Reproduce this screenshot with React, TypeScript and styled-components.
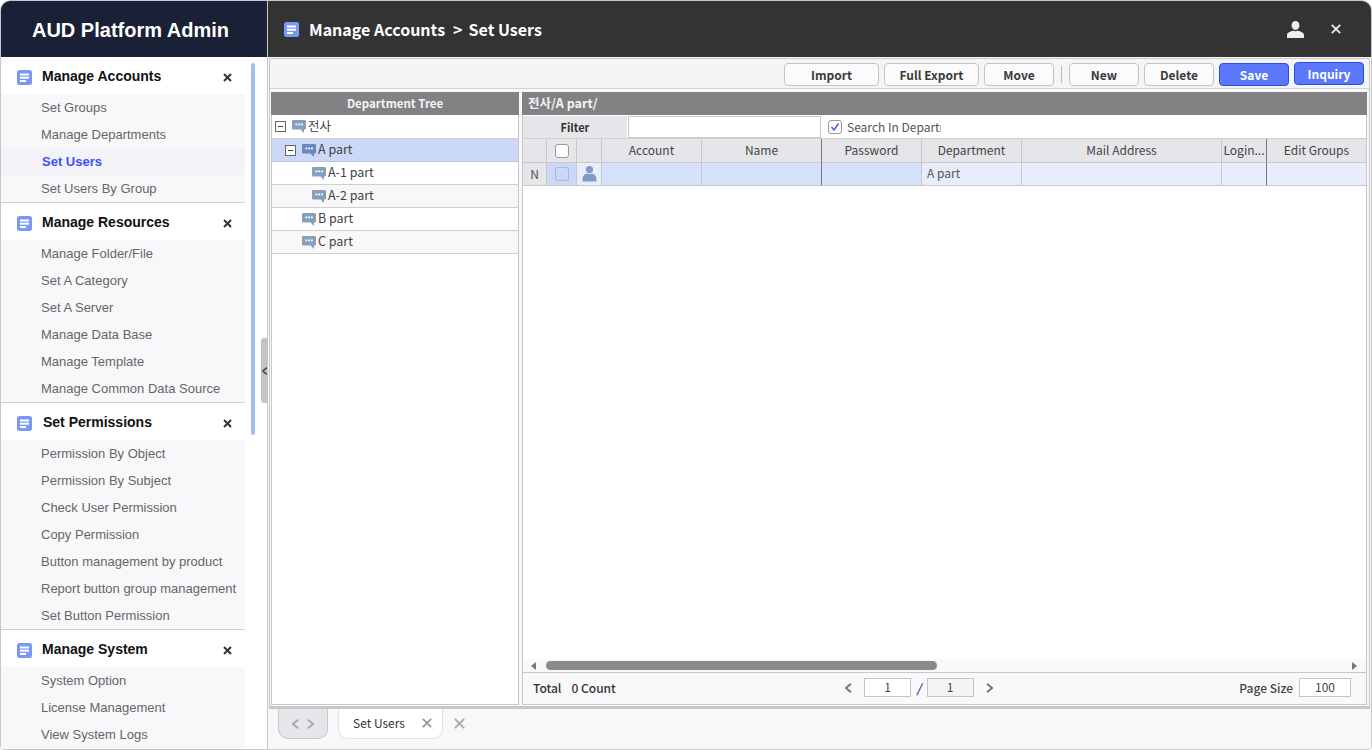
import React from "react";
import styled, { createGlobalStyle } from "styled-components";

const Global = createGlobalStyle`
  html, body { margin: 0; padding: 0; height: 100%; background: #fff; overflow: hidden; }
  #root { height: 100vh; }
  * { box-sizing: border-box; }
`;
const UI = `"Noto Sans CJK KR", "Noto Sans", sans-serif`;
const AR = `"Liberation Sans", Arial, sans-serif`;

const Frame = styled.div`
  width: 1372px; height: 750px; display: flex; overflow: hidden;
  border: 1px solid #c8c8c8; border-radius: 10px 10px 4px 4px; background: #f8f8fa; position: relative;
`;
const Side = styled.aside`
  width: 267px; flex: none; display: flex; flex-direction: column; border-right: 1px solid #c8c8c8; background: #fff; position: relative;
`;
const Brand = styled.div`
  height: 56px; flex: none; background: #1a2035; color: #fff; font: 700 20px ${AR};
  display: flex; align-items: center; justify-content: center; padding: 2px 7px 0 0;
`;
const Menu = styled.div`
  width: 244px; flex: 1; overflow: hidden; display: flex; flex-direction: column;
`;
const Section = styled.section`
  flex: none; border-bottom: 1px solid #cfcfcf;
  &:last-child { border-bottom: 0; }
`;
const SecTitle = styled.div`
  height: 37px; display: flex; align-items: center; padding: 0 13px 0 16px; background: #fff;
`;
const SecIcon = styled.span`
  display: flex; margin-top: 3px;
`;
const SecName = styled.span<{ $nudge?: number }>`
  font: 700 14px ${AR}; color: #111; margin-left: ${p => 10 + (p.$nudge || 0)}px; flex: 1;
`;
const Item = styled.div<{ $active?: boolean }>`
  height: 27px; padding-left: ${p => (p.$active ? 41 : 40)}px; font: ${p => (p.$active ? 700 : 400)} 13px/27px ${AR};
  background: ${p => (p.$active ? "#f3f3f7" : "#f8f8fa")}; color: ${p => (p.$active ? "#3e50f7" : "#666")};
  white-space: nowrap;
`;
const Thumb = styled.div`
  position: absolute; left: 250px; top: 62px; width: 4px; height: 372px; background: #a5bcf5; border-radius: 2px;
`;
const Handle = styled.div`
  position: absolute; left: 260px; top: 337px; width: 7px; height: 65px; background: #c4c4c4; border-radius: 3px 0 0 3px;
  display: flex; align-items: center; justify-content: center;
`;
const Main = styled.main`
  flex: 1; min-width: 0; display: flex; flex-direction: column;
`;
const Top = styled.header`
  height: 56px; flex: none; background: #333; color: #fff; display: flex; align-items: center; padding: 0 30px 0 16px;
`;
const Crumb = styled.div`
  font: 700 16px ${UI}; margin-left: 10px; flex: 1; display: flex; gap: 7px; color: #fff;
`;
const CrumbSep = styled.span`
  margin: 0 -1px 0 1px;
`;
const TopIcons = styled.div`
  display: flex; align-items: center; gap: 27px; margin-left: -1px;
`;
const Work = styled.div`
  height: 651px; flex: none; margin: 1px 1px 0 1px; border: 1px solid #c8c8c8; border-bottom-width: 3px;
  display: flex; flex-direction: column; background: #f8f8fa;
`;
const Toolbar = styled.div`
  height: 30px; flex: none; display: flex; align-items: center; justify-content: flex-end; gap: 5px; padding: 4px 5px 2px 0; background: #f5f5f8; border-bottom: 1px solid #cfcfcf;
`;
const Btn = styled.button<{ $w: number; $primary?: boolean; $up?: boolean }>`
  width: ${p => p.$w}px; height: 23px; padding: 0; border-radius: 4px; font: 700 12px ${UI};
  border: 1px solid ${p => (p.$primary ? "#2a50d8" : "#c4c4c4")};
  background: ${p => (p.$primary ? "#5b78fb" : "#fbfbfd")}; color: ${p => (p.$primary ? "#fff" : "#3a3a3a")};
  position: relative; top: ${p => (p.$up ? -1 : 0)}px;
  display: flex; align-items: center; justify-content: center;
`;
const Sep = styled.i`
  width: 1px; height: 17px; background: #bbb; margin: 0 2px;
`;
const Panels = styled.div`
  flex: 1; min-height: 0; display: flex; gap: 3px; padding: 3px 2px 1px 1px;
`;
const TreePanel = styled.div`
  width: 248px; flex: none; border: 1px solid #c8c8c8; border-top: 0; background: #fff; display: flex; flex-direction: column;
`;
const GridPanel = styled.div`
  flex: 1; min-width: 0; border: 1px solid #c8c8c8; border-top: 0; background: #fff; display: flex; flex-direction: column;
`;
const PanelHead = styled.div<{ $center?: boolean }>`
  height: 23px; flex: none; background: #828284; color: #f4f4f4; margin: 0 -1px;
  font: 700 ${p => (p.$center ? "11.5px" : "12.5px")}/22px ${UI};
  text-align: ${p => (p.$center ? "center" : "left")}; padding-left: ${p => (p.$center ? 0 : 6)}px;
`;
const TreeRow = styled.div<{ $indent: number; $sel?: boolean; $alt?: boolean; $first?: boolean }>`
  height: ${p => (p.$first ? 24 : 23)}px; flex: none; display: flex; align-items: center; padding-left: ${p => p.$indent}px; font: 400 12.5px ${UI}; color: #444;
  background: ${p => (p.$sel ? "#ccd8f8" : p.$alt ? "#f8f8f8" : "#fff")};
  border-bottom: 1px solid ${p => (p.$sel ? "#b9c6e8" : "#cfcfcf")};
`;
const TreeLabel = styled.span`
  margin: 0 0 3px 2px;
`;
const Toggle = styled.span`
  width: 11px; height: 11px; border: 1px solid #666; background: #fff; margin-right: 6px; position: relative; flex: none;
  &::after { content: ""; position: absolute; left: 2px; right: 2px; top: 4px; height: 1px; background: #444; }
`;
const FilterBar = styled.div`
  height: 24px; flex: none; display: flex; align-items: center; background: #fff; border-bottom: 1px solid #cfcfcf;
`;
const FilterLabel = styled.div`
  width: 104px; height: 22px; flex: none; background: #e6e6ea; font: 700 11px/22px ${UI}; color: #333; text-align: center;
`;
const FilterInput = styled.div`
  width: 193px; height: 22px; margin-left: 1px; flex: none; border: 1px solid #c8c8c8; background: #fff;
`;
const CheckBox = styled.span<{ $dim?: boolean }>`
  width: 14px; height: 14px; border: 1px solid ${p => (p.$dim ? "#a9b6d6" : "#999")}; border-radius: 3px; background: ${p => (p.$dim ? "#ccd8f8" : "#fff")};
  display: inline-flex; align-items: center; justify-content: center; flex: none;
`;
const FilterCheck = styled.div`
  display: flex; align-items: center; margin-left: 7px; width: 113px; overflow: hidden; gap: 5px; white-space: nowrap;
  font: 400 12px ${UI}; color: #555;
`;
const Table = styled.div`
  display: grid; grid-template-columns: 24px 30px 25px 100px 120px 100px 100px 200px 45px 100px; flex: none;
`;
const Th = styled.div<{ $dark?: boolean }>`
  height: 24px; background: #e6e6ea; border-right: 1px solid ${p => (p.$dark ? "#777" : "#c8c8c8")}; border-bottom: 1px solid #c8c8c8;
  font: 400 12px/20px ${UI}; color: #444; text-align: center; display: flex; align-items: center; justify-content: center; white-space: nowrap; overflow: hidden;
  padding-bottom: 2px;
`;
const ThCheck = styled(Th)`
  padding-bottom: 0;
`;
const Td = styled.div<{ $bg: string; $dark?: boolean }>`
  height: 23px; background: ${p => p.$bg}; border-right: 1px solid ${p => (p.$dark ? "#777" : "#c8c8c8")}; border-bottom: 1px solid #c8c8c8;
  font: 400 12px/20px ${UI}; color: #555; padding: 0 0 2px 5px; display: flex; align-items: center;
`;
const TdCenter = styled(Td)`
  justify-content: center; padding: 0;
`;
const Spacer = styled.div`
  flex: 1;
`;
const HScroll = styled.div`
  height: 14px; flex: none; background: #f9f9fb; display: flex; align-items: center; padding: 0 8px; gap: 10px; border-bottom: 1px solid #c8c8c8;
`;
const HThumb = styled.div`
  width: 391px; flex: none; height: 9px; background: #8a8a8a; border-radius: 5px;
`;
const Arrow = styled.i<{ $right?: boolean }>`
  width: 0; height: 0; flex: none; border-top: 4px solid transparent; border-bottom: 4px solid transparent;
  ${p => (p.$right ? "border-left: 5px solid #777; margin-left: 405px;" : "border-right: 5px solid #777;")}
`;
const Footer = styled.div`
  height: 31px; flex: none; display: flex; align-items: center; background: #f9f9fb; font: 500 12px ${UI}; color: #333; padding: 0 15px 2px 10px;
`;
const Total = styled.div`
  display: flex; gap: 10px; width: 312px;
`;
const Pager = styled.div`
  display: flex; align-items: center; flex: 1;
`;
const PagerGap = styled.span`
  width: 12px;
`;
const PageBox = styled.div<{ $ro?: boolean; $w?: number }>`
  width: ${p => p.$w || 47}px; height: 19px; border: 1px solid #c4c4c4; background: ${p => (p.$ro ? "#f4f4f4" : "#fff")};
  font: 400 12px/16px ${UI}; color: #444; text-align: center;
`;
const Slash = styled.span`
  color: #2a4a9a; margin: 0 5.5px; font: 700 12px ${UI}; font-style: italic;
`;
const PageSize = styled.span`
  margin-right: 6px; color: #444;
`;
const TabBar = styled.div`
  flex: 1; display: flex; align-items: flex-start; padding-left: 10px; background: #f8f8fa;
`;
const NavTab = styled.div`
  width: 50px; height: 30px; background: #e6e6ea; border: 1px solid #c8c8c8; border-top: 0; border-radius: 0 0 10px 10px;
  display: flex; align-items: center; justify-content: center; gap: 8px;
`;
const Tab = styled.div`
  width: 105px; height: 30px; margin-left: 10px; background: #fff; border: 1px solid #e4e4ea; border-top: 0; border-radius: 0 0 10px 10px;
  display: flex; align-items: center; padding: 0 10px 2px 14px; font: 400 12px ${UI}; color: #333; justify-content: space-between;
`;
const TabClose = styled.span`
  margin: 9px 0 0 11px; display: flex;
`;

const Doc = () => (
  <svg width="15" height="15" viewBox="0 0 15 15" style={{ flex: "none" }}>
    <rect width="15" height="15" rx="2.5" fill="#7b98f5" />
    <rect x="3" y="3.5" width="9" height="2" fill="#fff" />
    <rect x="3" y="6.7" width="9" height="2" fill="#fff" />
    <rect x="3" y="10" width="6" height="2" fill="#fff" />
  </svg>
);
const XSmall = () => (
  <svg width="9" height="9" viewBox="0 0 9 9" style={{ flex: "none", marginTop: 3 }}>
    <path d="M1 1 L8 8 M8 1 L1 8" stroke="#333" strokeWidth="2" />
  </svg>
);
const Bubble = ({ dark }: { dark?: boolean }) => (
  <svg width="14" height="13" viewBox="0 0 14 13" style={{ flex: "none" }}>
    <path d="M1.2 0 H12.8 A1.2 1.2 0 0 1 14 1.2 V8.3 A1.2 1.2 0 0 1 12.8 9.5 H12 V13 L8.5 9.5 H1.2 A1.2 1.2 0 0 1 0 8.3 V1.2 A1.2 1.2 0 0 1 1.2 0 Z" fill={dark ? "#6d86bb" : "#86a0bc"} />
    <rect x="3.4" y="3.5" width="1.8" height="1.8" fill="#fff" />
    <rect x="6.2" y="3.5" width="1.8" height="1.8" fill="#fff" />
    <rect x="9" y="3.5" width="1.8" height="1.8" fill="#fff" />
  </svg>
);
const Person = ({ size, color }: { size: number; color: string }) => (
  <svg width={size} height={size} viewBox="0 0 16 16">
    <ellipse cx="8" cy="4.2" rx="3.7" ry="4.2" fill={color} />
    <path d="M0 16 V13 C0 10.8 3.6 10 5.6 9 C7 9.8 9 9.8 10.4 9 C12.4 10 16 10.8 16 13 V16 Z" fill={color} />
  </svg>
);
const RowPerson = () => (
  <svg width="15" height="16" viewBox="0 0 15 16">
    <circle cx="7.5" cy="3.6" r="3.6" fill="#7f9bc4" />
    <path d="M.5 15.5 V13 C.5 9.5 3.5 7.6 5 7.4 C6.5 8.2 8.5 8.2 10 7.4 C11.5 7.6 14.5 9.5 14.5 13 V15.5 Z" fill="#7f9bc4" />
  </svg>
);
const Cross = ({ size, color, w }: { size: number; color: string; w: number }) => (
  <svg width={size} height={size} viewBox="0 0 10 10">
    <path d="M.8 .8 L9.2 9.2 M9.2 .8 L.8 9.2" stroke={color} strokeWidth={w} fill="none" />
  </svg>
);
const Chevron = ({ right, color, w = 2, h = 10 }: { right?: boolean; color: string; w?: number; h?: number }) => (
  <svg width={h * 0.7} height={h} viewBox="0 0 7 10">
    <path d={right ? "M1 .8 L6 5 L1 9.2" : "M6 .8 L1 5 L6 9.2"} stroke={color} strokeWidth={w} fill="none" />
  </svg>
);

const sections: { title: string; items: string[]; nudge?: number }[] = [
  { title: "Manage Accounts", items: ["Set Groups", "Manage Departments", "Set Users", "Set Users By Group"] },
  { title: "Manage Resources", items: ["Manage Folder/File", "Set A Category", "Set A Server", "Manage Data Base", "Manage Template", "Manage Common Data Source"] },
  { title: "Set Permissions", nudge: 1, items: ["Permission By Object", "Permission By Subject", "Check User Permission", "Copy Permission", "Button management by product", "Report button group management", "Set Button Permission"] },
  { title: "Manage System", items: ["System Option", "License Management", "View System Logs"] },
];
const buttons = [
  { t: "Import", w: 95 }, { t: "Full Export", w: 95 }, { t: "Move", w: 70 }, { sep: true },
  { t: "New", w: 70 }, { t: "Delete", w: 70 }, { t: "Save", w: 70, p: true }, { t: "Inquiry", w: 70, p: true, up: true },
] as { t?: string; w?: number; p?: boolean; up?: boolean; sep?: boolean }[];
const tree = [
  { t: "전사", i: 3, toggle: true, first: true },
  { t: "A part", i: 13, toggle: true, sel: true },
  { t: "A-1 part", i: 40 },
  { t: "A-2 part", i: 40, alt: true },
  { t: "B part", i: 30 },
  { t: "C part", i: 30, alt: true },
];
const cols = ["Account", "Name", "Password", "Department", "Mail Address", "Login...", "Edit Groups"];

export default function App() {
  return (
    <Frame>
      <Global />
      <Side>
        <Brand>AUD Platform Admin</Brand>
        <Menu>
          {sections.map(s => (
            <Section key={s.title}>
              <SecTitle>
                <SecIcon><Doc /></SecIcon>
                <SecName $nudge={s.nudge}>{s.title}</SecName>
                <XSmall />
              </SecTitle>
              {s.items.map(i => (
                <Item key={i} $active={i === "Set Users"}>{i}</Item>
              ))}
            </Section>
          ))}
        </Menu>
        <Thumb />
        <Handle><Chevron color="#444" w={2} h={8} /></Handle>
      </Side>
      <Main>
        <Top>
          <Doc />
          <Crumb><span>Manage Accounts</span><CrumbSep>&gt;</CrumbSep><span>Set Users</span></Crumb>
          <TopIcons>
            <Person size={17} color="#eee" />
            <Cross size={10} color="#eee" w={1.8} />
          </TopIcons>
        </Top>
        <Work>
          <Toolbar>
            {buttons.map((b, n) =>
              b.sep ? <Sep key={n} /> : <Btn key={n} $w={b.w!} $primary={b.p} $up={b.up}>{b.t}</Btn>
            )}
          </Toolbar>
          <Panels>
            <TreePanel>
              <PanelHead $center>Department Tree</PanelHead>
              {tree.map(r => (
                <TreeRow key={r.t} $indent={r.i} $sel={r.sel} $alt={r.alt} $first={r.first}>
                  {r.toggle && <Toggle />}
                  <Bubble dark={r.sel} />
                  <TreeLabel>{r.t}</TreeLabel>
                </TreeRow>
              ))}
            </TreePanel>
            <GridPanel>
              <PanelHead>전사/A part/</PanelHead>
              <FilterBar>
                <FilterLabel>Filter</FilterLabel>
                <FilterInput />
                <FilterCheck>
                  <CheckBox>
                    <svg width="10" height="10" viewBox="0 0 10 10"><path d="M1.5 5 L4 8 L8.5 1.5" stroke="#3a62e0" strokeWidth="1.4" fill="none" /></svg>
                  </CheckBox>
                  <span>Search In Department</span>
                </FilterCheck>
              </FilterBar>
              <Table>
                <Th />
                <ThCheck><CheckBox /></ThCheck>
                <Th />
                {cols.map(c => <Th key={c} $dark={c === "Name" || c === "Login..."}>{c}</Th>)}
                <TdCenter $bg="#e6e6ea">N</TdCenter>
                <TdCenter $bg="#ccd8f8"><CheckBox $dim /></TdCenter>
                <TdCenter $bg="#e8edfb"><RowPerson /></TdCenter>
                <Td $bg="#d6e1fb" />
                <Td $bg="#d6e1fb" $dark />
                <Td $bg="#d6e1fb" />
                <Td $bg="#e8edfb">A part</Td>
                <Td $bg="#e8edfb" />
                <Td $bg="#e8edfb" $dark />
                <Td $bg="#e8edfb" />
              </Table>
              <Spacer />
              <HScroll>
                <Arrow />
                <HThumb />
                <Arrow $right />
              </HScroll>
              <Footer>
                <Total><span>Total</span><span>0 Count</span></Total>
                <Pager>
                  <Chevron color="#777" />
                  <PagerGap />
                  <PageBox>1</PageBox>
                  <Slash>/</Slash>
                  <PageBox $ro>1</PageBox>
                  <PagerGap />
                  <Chevron right color="#777" />
                </Pager>
                <PageSize>Page Size</PageSize>
                <PageBox $w={52}>100</PageBox>
              </Footer>
            </GridPanel>
          </Panels>
        </Work>
        <TabBar>
          <NavTab>
            <Chevron color="#aaa" />
            <Chevron right color="#aaa" />
          </NavTab>
          <Tab>
            <span>Set Users</span>
            <Cross size={10} color="#999" w={1.8} />
          </Tab>
          <TabClose><Cross size={11} color="#aaa" w={1.8} /></TabClose>
        </TabBar>
      </Main>
    </Frame>
  );
}
